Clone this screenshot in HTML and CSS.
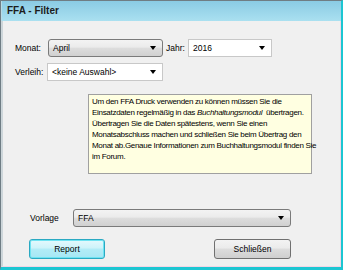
FILE: index.html
```html
<!DOCTYPE html>
<html lang="de">
  <head>
    <meta charset="UTF-8" />
    <title>FFA - Filter</title>
    <link rel="stylesheet" href="styles.css">
  </head>
  <body>
    <div class="window">
      <div class="titlebar">FFA - Filter</div>

      <div class="client">
        <div class="row row-top">
          <span class="label lbl-monat">Monat:</span>
          <div class="combo combo-btn w-monat">
            <span>April</span>
            <i class="arrow"></i>
          </div>
          <span class="label lbl-jahr">Jahr:</span>
          <div class="combo w-jahr">
            <span>2016</span>
            <i class="arrow"></i>
          </div>
        </div>

        <div class="row row-verleih">
          <span class="label lbl-verleih">Verleih:</span>
          <div class="combo w-verleih">
            <span>&lt;keine Auswahl&gt;</span>
            <i class="arrow"></i>
          </div>
        </div>

        <div class="info">
          Um den FFA Druck verwenden zu können müssen Sie die<br>
          Einsatzdaten regelmäßig in das <i>Buchhaltungsmodul</i>&nbsp; übertragen.<br>
          Übertragen Sie die Daten spätestens, wenn Sie einen<br>
          Monatsabschluss machen und schließen Sie beim Übertrag den<br>
          Monat ab.Genaue Informationen zum Buchhaltungsmodul finden Sie<br>
          im Forum.
        </div>

        <div class="row row-vorlage">
          <span class="label lbl-vorlage">Vorlage</span>
          <div class="combo combo-btn w-vorlage">
            <span>FFA</span>
            <i class="arrow"></i>
          </div>
        </div>

        <div class="buttons">
          <button class="btn btn-default">Report</button>
          <button class="btn">Schließen</button>
        </div>
      </div>
    </div>
  </body>
</html>
```

FILE: styles.css
```css
* {
  margin: 0;
  padding: 0;
  box-sizing: border-box;
}

body {
  font-family: "Liberation Sans", Arial, sans-serif;
  font-size: 8.5px;
  color: #000;
  background: #f0f0f0;
}

.window {
  width: 343px;
  height: 270px;
  display: flex;
  flex-direction: column;
  border-top: 1px solid #6f7d84;
  border-left: 1px solid #6f7d84;
  border-right: 2px solid #1cc6d2;
  border-bottom: 3px solid #1cc6d2;
}

.titlebar {
  height: 20px;
  line-height: 20px;
  padding-left: 5px;
  font-size: 10px;
  font-weight: bold;
  color: #1c1c1c;
  background: linear-gradient(to bottom, #8acbe4, #aae0f0);
  border-left: 1px solid #b8dbe6;
}

.client {
  flex: 1;
  background: #f0f0f0;
  border-left: 2px solid #cdd6da;
  border-right: 1px solid #f2d6e6;
  border-bottom: 1px solid #f2d6e6;
  padding: 18px 0 0 12px;
}

.row {
  display: flex;
  align-items: center;
  height: 18px;
}

.row-verleih {
  margin-top: 6px;
}

.label {
  white-space: nowrap;
}

.lbl-monat {
  width: 33px;
}

.lbl-jahr {
  width: 22px;
  margin-left: 3px;
}

.lbl-verleih {
  width: 32px;
}

.combo {
  height: 18px;
  display: flex;
  align-items: center;
  padding: 0 6px 0 4px;
  background: #fff;
  border: 1px solid #c8c8c8;
  font-size: 8.5px;
}

.combo-btn {
  border: 1px solid #7a7a7a;
  border-radius: 3px;
  background: linear-gradient(to bottom, #f3f3f3 0%, #ebebeb 45%, #dddddd 50%, #d0d0d0 100%);
}

.arrow {
  margin-left: auto;
  width: 0;
  height: 0;
  border-left: 3.5px solid transparent;
  border-right: 3.5px solid transparent;
  border-top: 4px solid #000;
}

.w-monat {
  width: 115px;
}

.w-jahr {
  width: 84px;
}

.w-verleih {
  width: 116px;
}

.info {
  margin: 13px 0 0 73px;
  width: 224px;
  height: 80px;
  padding: 1px 0 0 3px;
  background: #ffffe1;
  border: 1px solid #a0a0a0;
  font-size: 8px;
  letter-spacing: -0.3px;
  line-height: 11px;
  white-space: nowrap;
}

.row-vorlage {
  margin-top: 35px;
  padding-left: 15px;
}

.lbl-vorlage {
  width: 43px;
}

.w-vorlage {
  width: 218px;
}

.buttons {
  display: flex;
  gap: 109px;
  margin-top: 12px;
  padding-left: 14px;
}

.btn {
  width: 77px;
  height: 20px;
  font-family: "Liberation Sans", Arial, sans-serif;
  font-size: 8.5px;
  color: #000;
  border: 1px solid #707070;
  border-radius: 3px;
  background: linear-gradient(to bottom, #f3f3f3 0%, #ebebeb 45%, #dddddd 50%, #cfcfcf 100%);
}

.btn-default {
  width: 76px;
  border-color: #2aa9c2;
  background: linear-gradient(to bottom, #e4f9fd 0%, #cdf3fa 45%, #b2ecf7 50%, #a6e7f4 100%);
  box-shadow: inset 0 0 0 1px #6fe3f2;
}
```
